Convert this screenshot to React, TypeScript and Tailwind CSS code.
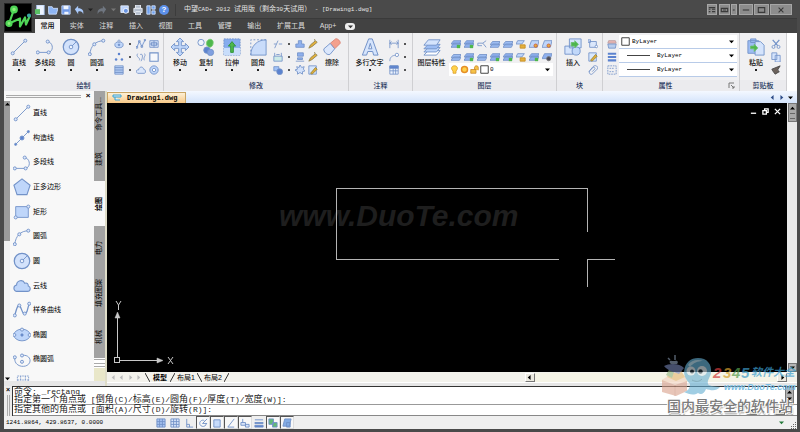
import { useState, type ReactNode } from 'react';
import clsx from 'clsx';

const LINE = '#7292c8';
const FILL = '#bfd6fa';
const DEEP = '#5b82cf';
const GREEN = '#4eb74c';
const GOLD = '#e3b03a';

function Node({ x, y }: { x: number; y: number }) {
  return <circle cx={x} cy={y} r={1.7} fill="#dfe9fb" stroke={LINE} strokeWidth={1} />;
}

// 20 x 20 drawings used by the ribbon and the palette
const BIG: Record<string, ReactNode> = {
  line: (
    <>
      <path d="M3 17 17 3" />
      <Node x={3} y={17} />
      <Node x={17} y={3} />
    </>
  ),
  xline: (
    <>
      <path d="M2 18 18 2" />
      <circle cx={10} cy={10} r={2.2} fill={DEEP} />
      <circle cx={3} cy={17} r={1.2} fill={DEEP} />
      <circle cx={17} cy={3} r={1.2} fill={DEEP} />
    </>
  ),
  pline: (
    <>
      <path d="M2 16h12c5-1 6-9 0-12" />
      <Node x={2} y={16} />
      <Node x={14} y={16} />
      <Node x={13} y={4} />
    </>
  ),
  circle: (
    <>
      <circle cx={10} cy={10} r={8.6} fill="#d3e2fb" strokeWidth={1.4} />
      <circle cx={10} cy={10} r={2} fill="#eef4fe" />
      <path d="m11 9 5-5" />
    </>
  ),
  arc: (
    <>
      <path d="M2 18C3 9 8 3 18 3" />
      <Node x={2} y={18} />
      <Node x={7} y={7} />
      <Node x={17} y={3} />
    </>
  ),
  polygon: <path d="m10 1 9 7-3.500 10.500h-11L1 8z" fill={FILL} strokeWidth={1.200} />,
  rect: (
    <>
      <path d="M3 4h14v12H3z" fill={FILL} />
      <Node x={17} y={4} />
      <Node x={3} y={16} />
    </>
  ),
  cloud: (
    <path d="M4 16c-4-1-4-6 0-7 0-5 7-7 9-2 3-1 4 1 4 3 3 1 3 6-1 6z" fill={FILL} strokeWidth={1.200} />
  ),
  spline: (
    <>
      <path d="M2 16C4 8 6 2 8 6s3 10 6 8 2-8 4-10" strokeWidth={1.400} />
      <Node x={2} y={16} />
      <Node x={7} y={5} />
      <Node x={13} y={14} />
      <Node x={18} y={3} />
    </>
  ),
  ellipse: (
    <>
      <ellipse cx={10} cy={10} rx={9} ry={6.500} fill={FILL} />
      <Node x={10} y={4} />
      <Node x={1.500} y={10} />
      <Node x={18.500} y={10} />
      <circle cx={10} cy={10} r={1.300} fill={DEEP} />
    </>
  ),
  ellipseArc: (
    <>
      <path d="M2 8c-1 11 16 12 17 3 0-5-5-7-9-6" />
      <Node x={2} y={7} />
      <Node x={10} y={5} />
      <Node x={10} y={12} />
    </>
  ),
  block: <path d="M3 20V5h14v15M7 5v15M13 5v15M3 10h14" strokeDasharray="2 1" />,
  move: (
    <path
      d="m10 0 4 4h-2.500v4.500H16V6l4 4-4 4v-2.500h-4.500V16H14l-4 4-4-4h2.500v-4.500H4V14l-4-4 4-4v2.500h4.500V4H6z"
      fill={FILL}
    />
  ),
  copy: (
    <>
      <circle cx={4.500} cy={5} r={3.500} fill="#eff4fc" />
      <path d="M11 4c2-4 7-3 7 1s-3 6-5 5-3-3-2-6z" fill={GREEN} stroke="#75c96f" />
      <circle cx={11} cy={13.500} r={3.500} fill={DEEP} />
      <circle cx={15} cy={16} r={3.500} fill="#7f9fe0" />
    </>
  ),
  stretch: (
    <>
      <path d="M1 1h18v18H1z" fill="#86acee" strokeDasharray="2 1" />
      <path d="M1 11h18v8H1z" fill="#c8ddfb" stroke="none" />
      <path d="m10 4 4 5h-2.500v7h-3V9H6z" fill={GREEN} stroke="#2d9339" />
    </>
  ),
  fillet: (
    <>
      <path d="M2 19C2 9 9 2 19 2v17z" fill="#c9dcfa" />
      <path d="M2 19V2h17" strokeDasharray="2 2" />
    </>
  ),
  erase: (
    <>
      <path d="m8 6 6-5c2-1 6 3 5 5l-6 6z" fill="#f3a08d" stroke="#da8273" />
      <path d="m8 6 5 6-5 6c-3 2-8-3-7-6z" fill="#dbe7fc" />
    </>
  ),
  text: <path d="M8.500 1h4L19 19h-5l-1-4H7.500l-1.300 4H1.500zM10.300 6 8.500 12h3.600z" fill="#d5e4fc" strokeWidth={1.100} />,
  layers: (
    <>
      <path d="M6 14h13l-4 5H1z" fill="#fff" />
      <path d="M6 10.500h13L15 15.500H1z" fill={FILL} />
      <path d="M6 7h13l-4 5H1z" fill="#9dbdf3" />
      <path d="M6 2h13l-4 6H1z" fill="#d5e4fc" />
    </>
  ),
  insert: (
    <>
      <path d="M6 1h13v10H6zM1 9h9v9H1z" fill="#d5e4fc" />
      <circle cx={13.500} cy={14.500} r={4.500} fill="#c1d8fa" />
      <path d="M8 5h4V3l4 4-4 4V9H8z" fill={GREEN} stroke="#6cc070" />
    </>
  ),
  paste: (
    <>
      <path d="M1 3h12v14H1zM4 1h6v4H4z" fill="#9dbdf3" />
      <path d="M9 4h6l4 4v11H9z" fill="#d5e4fc" />
      <path d="M4 9h4V7l4 4-4 4v-3H4z" fill={GREEN} stroke="#6cc070" />
    </>
  ),
};

// 12 x 12 drawings
const SMALL: Record<string, ReactNode> = {
  dot: <circle cx={6} cy={6} r={1.500} fill="#222" stroke="none" />,
  ellipse: (
    <>
      <ellipse cx={6} cy={7} rx={5} ry={3.500} fill={FILL} />
      <circle cx={6} cy={2.500} r={1.300} fill="#fff" />
      <circle cx={6} cy={7} r={1} fill={DEEP} />
    </>
  ),
  spline: <path d="M1 10 4 3l3 6 4-8M0 9h2v2H0zM3 2h2v2H3zM6 8h2v2H6zM10 0h2v2h-2z" fill="#dfe9fb" />,
  table: <path d="M1 2h10v8H1zM1 6h10M6 2v8M3 4h6v4H3z" fill="#dbe7fb" />,
  points: (
    <>
      <circle cx={6} cy={2.500} r={1.500} fill={DEEP} stroke="none" />
      <circle cx={2.500} cy={9} r={1.500} fill={DEEP} stroke="none" />
      <circle cx={9.500} cy={9} r={1.500} fill={DEEP} stroke="none" />
    </>
  ),
  helix: <path d="M2 2c-3 4 4 5 2 8M5 3c4-2 3 5 1 8M10 2c3 2-2 4 0 8" />,
  square: <path d="M1 1h10v10H1z" fill="#f6f8fc" strokeWidth={1.300} />,
  hatch: <path d="M1 1h10v10H1zM1 3h10M1 5h10M1 7h10M1 9h10" fill={FILL} />,
  cloud: <path d="M2 10c-3-2-1-5 1-4 1-5 6-4 6-1 3 0 3 5 1 5z" fill="#dbe7fb" />,
  donut: (
    <>
      <circle cx={6} cy={6} r={5} fill={FILL} />
      <circle cx={6} cy={6} r={2} fill="#fff" />
    </>
  ),
  trim: <path d="m2 11 4-9M1 6h3M7 6h4" />,
  mirror: <path d="M1 10V6h3V2h4v4h3v4z" fill="#8fb0ee" />,
  brush: <path d="m1 11 2-4 6-5 2 2-6 5zM8 2V0" fill={GOLD} stroke="#8c8052" />,
  array: <path d="M1 5h10v6H1zM2 5V1M10 5V1M4 3h4" fill="#cdeae7" />,
  align: <path d="M3 1h7v4H3zM1 11h10M3 7h6v2H3z" fill="#8fb0ee" />,
  offset: (
    <>
      <path d="M1 2h6v5H1z" fill="#a0c1f7" />
      <circle cx={8} cy={8} r={3.500} fill={DEEP} />
    </>
  ),
  gear: <path d="m6 0 2 3 3-1-1 3 2 2-3 1v3L6 9l-3 2V8L0 6l3-1-1-3 3 1z" fill="#d3e2fb" />,
  edit: (
    <>
      <path d="M1 1h9v10H1z" fill="#d8e7fb" />
      <path d="m3 10 6-7 2 2-6 6z" fill={GOLD} stroke="#958239" />
    </>
  ),
  dim: <path d="M1 1v10M11 1v10M1 5h10M3 3 1 5l2 2M9 3l2 2-2 2" />,
  leader: (
    <>
      <path d="M1 11c0-5 3-7 7-7" />
      <circle cx={9.500} cy={3.500} r={2} fill="#fff" />
    </>
  ),
  grid: (
    <>
      <path d="M1 1h10v10H1zM1 7h10M5 4v7M8 4v7" fill="#eef4fe" />
      <path d="M1 1h10v3H1z" fill={DEEP} />
    </>
  ),
  layer: <path d="M3 6h9l-2 4H0zM3 3h9l-2 4H0z" fill="#9dbdf3" />,
  layerCheck: (
    <>
      <path d="M3 5h9l-2 5H0zM3 2h9l-2 4H0z" fill="#8fb0ee" />
      <path d="M7 7h4v4H7z" fill={GREEN} stroke="none" />
    </>
  ),
  layerArrow: <path d="M1 5h6l4-3M7 5l4 5M1 5v3h5" />,
  layerGold: (
    <>
      <path d="M2 2h8L7 6H0z" fill={FILL} />
      <path d="M5 7h6v4H5z" fill={GOLD} stroke="#c58b22" />
    </>
  ),
  layerRed: (
    <>
      <path d="M3 2h9l-2 8H0z" fill={FILL} />
      <circle cx={8} cy={8} r={2} fill={GOLD} stroke="#cb593d" />
    </>
  ),
  layerDark: (
    <>
      <path d="M3 2h9l-2 6H0z" fill="#8fb0ee" />
      <circle cx={8} cy={8} r={2.500} fill="#4c4c5c" stroke="#777" />
    </>
  ),
  bulb: <path d="M4 8C0 4 3 1 6 1s6 3 2 7v3H4z" fill="#ffd24a" stroke="#d89a28" />,
  sun: <circle cx={6} cy={6} r={4} fill="#ffd24a" stroke="#e58e27" strokeWidth={2} />,
  lock: <path d="M1 6h7v5H1zM6 6V3c1-3 5-2 5 0v4" fill="#f6c248" stroke="#c58325" />,
  swatch: <path d="M1 1h10v10H1z" fill="#fff" stroke="#333" strokeWidth={1.200} />,
  create: (
    <>
      <path d="M2 3h8v7H2zM0 1h3v3H0z" fill="#dbe7fb" />
      <circle cx={10} cy={9} r={1.500} fill="#fff" />
    </>
  ),
  clip: <path d="m1 8 5-6c3-3 7 0 5 3l-5 5c-2 3-6 0-4-3l4-4c2-1 3 1 2 2L5 8" />,
  palette: (
    <>
      <path d="M2 2h8l1 3H1z" fill="#e9b6b2" stroke="#bb9b9d" />
      <path d="M1 6h10l-1 5H2z" fill="#b9cdec" />
    </>
  ),
  weights: <path d="M1 2h10M1 6h10M1 10h10" stroke={DEEP} strokeWidth={2.500} />,
  linetype: <path d="M1 1h10v10H1zM3 4h6M3 8h6" strokeDasharray="2 1" />,
  cut: (
    <>
      <path d="m2 1 6 7M10 1 4 8" strokeWidth={1.500} />
      <circle cx={3} cy={9.500} r={1.800} />
      <circle cx={9} cy={9.500} r={1.800} />
    </>
  ),
  pages: <path d="M1 1h6v8H1zM5 4h6v8H5z" fill="#d5e4fc" />,
  match: <path d="m1 5 5-2 5-2-3 5 2 2-5 3-3-4z" fill="#6c625c" stroke="#444" />,
  save: (
    <>
      <path d="M1 1h10v10H1z" fill="#6f98e6" stroke="#c3d7fb" />
      <path d="M3 1h6v4H3zM4 8h5v3H4z" fill="#eef4ff" stroke="none" />
    </>
  ),
  newDoc: (
    <>
      <path d="M2 0h9v12H2z" fill="#eef4ff" stroke="#a6c4f0" />
      <path d="M0 5h6v6H0z" fill="#5bc065" stroke="none" />
    </>
  ),
  open: <path d="M0 2h5l1 2h6L10 11H1z" fill="#8eb5f4" stroke="#cddffb" />,
  undo: <path d="m1 5 4-4v3c5 0 7 3 6 7-1-3-3-4-6-3v3z" fill="#a9c9fa" stroke="none" />,
  redo: <path d="m11 5-4-4v3C2 4 0 7 1 11c1-3 3-4 6-3v3z" fill="#6f7680" stroke="none" />,
  preview: (
    <>
      <path d="M1 1h9v8H1z" fill="#bcd3fb" stroke="#e5eefe" />
      <circle cx={7} cy={7} r={3} fill="#6b96e3" stroke="#fff" />
    </>
  ),
  print: <path d="M3 0h6v4h2v5H9v3H3V9H1V4h2zM3 4h6M3 8h6" fill="#b5bfce" stroke="#f2f5fa" />,
  publish: <path d="M1 1h4v10H1zM7 1h4v4H7zM7 7h4v4H7z" fill="#6fa0ef" stroke="#dce8fd" />,
};

function BigIcon({ name, className }: { name: string; className?: string }) {
  return (
    <svg viewBox="0 0 20 20" className={clsx('shrink-0', className)} fill="none" stroke={LINE} aria-hidden="true">
      {BIG[name]}
    </svg>
  );
}

function SmallIcon({ name, className = 'size-[10px]' }: { name: string; className?: string }) {
  return (
    <svg viewBox="0 0 12 12" className={clsx('shrink-0', className)} fill="none" stroke={LINE} aria-hidden="true">
      {SMALL[name]}
    </svg>
  );
}

function Arrow({ dir = 'down', className = 'text-black' }: { dir?: 'down' | 'left' | 'right' | 'up'; className?: string }) {
  const d = {
    down: 'M0 2h7L3.500 6z',
    up: 'M0 5h7L3.500 1z',
    left: 'M5 0v7L1 3.500z',
    right: 'M2 0v7l4-3.500z',
  }[dir];
  return (
    <svg viewBox="0 0 7 7" className={clsx('size-[5px] shrink-0', className)} fill="currentColor" aria-hidden="true">
      <path d={d} />
    </svg>
  );
}

function ToolButton({ icon, label, menu = true, wide = false }: { icon: string; label: string; menu?: boolean; wide?: boolean }) {
  return (
    <button type="button" className={clsx('flex shrink-0 flex-col items-center pt-[5px]', wide ? 'w-[35px]' : 'w-[26px]')}>
      <BigIcon name={icon} className="size-[18px]" />
      <span className="mt-[2px] text-[7px] leading-[9px] font-medium whitespace-nowrap text-[#151515]">{label}</span>
      {menu && <span className="mt-[2px] size-[2px] bg-[#222]" />}
    </button>
  );
}

// A name of "dot" is the drop-down mark of the icon before it
function IconColumns({ icons, className }: { icons: string[]; className: string }) {
  return (
    <div className={clsx('grid auto-rows-[13px] content-start justify-items-center pt-[4px]', className)}>
      {icons.map((name, i) => (
        <button key={i} type="button" aria-label={name} className="flex items-center">
          <SmallIcon name={name} className={name === 'dot' ? 'size-[8px]' : 'size-[10px]'} />
        </button>
      ))}
    </div>
  );
}

function Panel({ title, className, launcher, children }: { title: string; className: string; launcher?: boolean; children: ReactNode }) {
  return (
    <section className={clsx('flex shrink-0 flex-col border-r border-[#cfcfd2]', className)}>
      <div className="flex h-[47px]">{children}</div>
      <div className="flex h-[11px] items-center bg-[#ebebee] text-[7px] text-[#26365c]">
        <h2 className="flex-1 text-center leading-[11px] font-medium">{title}</h2>
        {launcher && (
          <button type="button" aria-label="属性设置" className="mr-1">
            <svg viewBox="0 0 7 7" className="size-[7px]" fill="none" stroke="#777" aria-hidden="true">
              <path d="M1 6V1h5M3 3l3 3M6 4v2H4" />
            </svg>
          </button>
        )}
      </div>
    </section>
  );
}

const MENU_TABS = ['实体', '注释', '插入', '视图', '工具', '管理', '输出'];

const PALETTE = [
  { icon: 'line', label: '直线' },
  { icon: 'xline', label: '构造线' },
  { icon: 'pline', label: '多段线' },
  { icon: 'polygon', label: '正多边形' },
  { icon: 'rect', label: '矩形' },
  { icon: 'arc', label: '圆弧' },
  { icon: 'circle', label: '圆' },
  { icon: 'cloud', label: '云线' },
  { icon: 'spline', label: '样条曲线' },
  { icon: 'ellipse', label: '椭圆' },
  { icon: 'ellipseArc', label: '椭圆弧' },
];

const SIDE_TABS = [
  { label: '命令工具...', size: 'h-[45px]' },
  { label: '建筑', size: 'h-[45px]' },
  { label: '绘图', size: 'h-[45px]' },
  { label: '电力', size: 'h-[44px]' },
  { label: '填充图案', size: 'h-[45px]' },
  { label: '机械', size: 'h-[43px]' },
];

function TitleBar() {
  return (
    <div className="flex h-[19px] items-center border-b border-[#3a3a3a] pt-px pl-[3px]">
      <div className="flex items-center gap-[3px]">
        <QuickButton name="newDoc" label="新建" />
        <QuickButton name="open" label="打开" />
        <QuickButton name="save" label="保存" />
        <QuickButton name="undo" label="放弃" />
        <Arrow className="mx-px text-[#222]" />
        <QuickButton name="redo" label="重做" />
        <Arrow className="mx-px text-[#777]" />
        <QuickButton name="preview" label="预览" />
        <QuickButton name="print" label="打印" />
        <QuickButton name="publish" label="发布" />
        <button type="button" aria-label="帮助" className="size-[10px] rounded-full bg-[#5d91ea] text-[8px] leading-[10px] font-bold text-white">
          ?
        </button>
      </div>
      <span className="ml-[6px] h-[12px] w-px bg-[#3c3c3c]" />
      <h1 className="ml-[8px] text-[7px] whitespace-pre text-[#e4e4e4]">
        中望<Mono>CAD+ 2012 </Mono>试用版（剩余<Mono>30</Mono>天试用）<Mono> - [Drawing1.dwg]</Mono>
      </h1>
      <div className="mr-[5px] ml-auto flex items-center gap-px text-[#3a3a3a]">
        <WinButton label="样式" className="mr-px w-[10px]" d="M1 2h8M1 4h2M5 4h4M1 7h2M5 7h4" />
        <WinButton label="界面" className="w-[11px]" d="M1 3h8v4H1zM3 5h4" />
        <WinButton label="更多" className="mr-px w-[6px]" d="M3 4h3v2H3z" />
        <WinButton label="最小化" className="w-[14px]" d="M1 5h8" />
        <WinButton label="最大化" className="w-[15px]" d="M1 2h8v6H1z" />
        <WinButton label="关闭" className="w-[22px]" d="m2 2 6 6M8 2 2 8" />
      </div>
    </div>
  );
}

function Mono({ children }: { children: ReactNode }) {
  return <span className="font-['Liberation_Mono','Noto_Sans_CJK_SC',monospace] text-[6px]">{children}</span>;
}

function QuickButton({ name, label }: { name: string; label: string }) {
  return (
    <button type="button" aria-label={label}>
      <SmallIcon name={name} />
    </button>
  );
}

function WinButton({ label, className, d }: { label: string; className: string; d: string }) {
  return (
    <button type="button" aria-label={label} className={clsx('flex h-[11px] items-center justify-center border border-[#a6a6a6] bg-[#8c8c8c]', className)}>
      <svg viewBox="0 0 10 10" className="h-[8px] w-full" fill="none" stroke="currentColor" strokeWidth={1.400} aria-hidden="true">
        <path d={d} />
      </svg>
    </button>
  );
}

const SELECT =
  "h-[12px] min-w-0 flex-1 appearance-none bg-transparent font-['Liberation_Mono',monospace] text-[6px] leading-[12px] text-black outline-none";

function PropertySelect({ label, lead }: { label: string; lead: 'swatch' | 'line' }) {
  return (
    <div className="flex h-[14px] items-center border-b border-[#b8cbe8] bg-white pr-[3px]">
      {lead === 'swatch' ? (
        <SmallIcon name="swatch" className="mx-[2px] size-[9px]" />
      ) : (
        <span className="mr-[7px] ml-[8px] h-px w-[23px] shrink-0 bg-[#444]" />
      )}
      <select aria-label={label} className={SELECT}>
        <option>ByLayer</option>
      </select>
      <Arrow />
    </div>
  );
}

function Ribbon() {
  return (
    <div className="flex h-[58px] overflow-hidden bg-[#f0f0f2]">
      <Panel title="绘制" className="w-[160px]">
        <div className="flex pl-[2px]">
          <ToolButton icon="line" label="直线" />
          <ToolButton icon="pline" label="多线段" />
          <ToolButton icon="circle" label="圆" />
          <ToolButton icon="arc" label="圆弧" />
        </div>
        <IconColumns
          className="ml-[2px] grid-cols-[14px_8px_13px_13px]"
          icons={['ellipse', 'dot', 'spline', 'table', 'points', 'dot', 'helix', 'square', 'hatch', 'dot', 'cloud', 'donut']}
        />
      </Panel>
      <Panel title="修改" className="w-[185px]">
        <div className="flex pl-[3px]">
          <ToolButton icon="move" label="移动" />
          <ToolButton icon="copy" label="复制" />
          <ToolButton icon="stretch" label="拉伸" />
          <ToolButton icon="fillet" label="圆角" />
        </div>
        <IconColumns
          className="grid-cols-[14px_8px_13px_13px]"
          icons={['trim', 'dot', 'mirror', 'brush', 'array', 'dot', 'align', 'brush', 'offset', 'dot', 'gear', 'edit']}
        />
        <ToolButton icon="erase" label="擦除" menu={false} />
      </Panel>
      <Panel title="注释" className="w-[64px]">
        <div className="flex pl-[3px]">
          <ToolButton icon="text" label="多行文字" wide />
        </div>
        <IconColumns className="grid-cols-[14px_8px]" icons={['dim', 'dot', 'leader', 'dot', 'grid', 'dot']} />
      </Panel>
      <Panel title="图层" className="w-[144px]">
        <div className="flex pl-px">
          <ToolButton icon="layers" label="图层特性" wide menu={false} />
        </div>
        <div>
          <IconColumns
            className="grid-cols-[repeat(8,13px)]"
            icons={[
              'layerCheck', 'layerCheck', 'layerArrow', 'layer', 'layer', 'layerGold', 'layerRed', 'layerRed',
              'layer', 'layerCheck', 'layer', 'layerCheck', 'layerCheck', 'layerGold', 'layerCheck', 'layerDark',
            ]}
          />
          <div className="flex h-[13px] items-center gap-px bg-white pr-[3px] pl-px">
            <SmallIcon name="bulb" className="size-[9px]" />
            <SmallIcon name="sun" className="size-[9px]" />
            <SmallIcon name="lock" className="size-[9px]" />
            <SmallIcon name="swatch" className="size-[9px]" />
            <select aria-label="当前图层" className={SELECT}>
              <option>0</option>
            </select>
            <Arrow />
          </div>
        </div>
      </Panel>
      <Panel title="块" className="w-[46px]">
        <div className="flex pl-[3px]">
          <ToolButton icon="insert" label="插入" menu={false} />
        </div>
        <IconColumns className="grid-cols-[14px]" icons={['create', 'edit', 'clip']} />
      </Panel>
      <Panel title="属性" className="w-[137px]" launcher>
        <IconColumns className="ml-[2px] grid-cols-[14px]" icons={['palette', 'weights', 'linetype']} />
        <div className="flex-1 pt-[2px] pr-[2px]">
          <PropertySelect label="颜色" lead="swatch" />
          <PropertySelect label="线宽" lead="line" />
          <PropertySelect label="线型" lead="line" />
        </div>
      </Panel>
      <Panel title="剪贴板" className="w-[47px]">
        <div className="flex pl-[3px]">
          <ToolButton icon="paste" label="粘贴" />
        </div>
        <IconColumns className="grid-cols-[14px]" icons={['cut', 'pages', 'match']} />
      </Panel>
      <div className="flex-1 bg-white" />
    </div>
  );
}

function ToolPalette() {
  const [active, setActive] = useState('绘图');
  return (
    <aside className="flex w-[103px] shrink-0 overflow-hidden border-r-2 border-[#dedcc8]">
      <div className="flex min-w-0 flex-1 flex-col bg-[#f8f8f8]">
        <div className="flex h-[10px] shrink-0 items-center gap-[4px] pl-[2px]">
          <span className="h-[3px] flex-1 border-y border-[#a9a9a9]" />
          <button type="button" aria-label="关闭面板" className="mr-[3px] w-[6px] text-[8px] leading-[8px] font-bold">×</button>
        </div>
        <div className="flex min-h-0 flex-1">
          <div className="flex w-[6px] flex-col items-center justify-between bg-[#f1f1f1]">
            <div className="flex h-[50%] w-full flex-col items-center bg-[#9b9b9b] pt-px">
              <Arrow dir="up" />
            </div>
            <Arrow />
          </div>
          <ul className="flex flex-1 flex-col">
            {PALETTE.map((item) => (
              <li key={item.label} className="flex min-h-0 flex-1">
                <button type="button" className="flex items-center gap-[2px] pl-[3px]">
                  <BigIcon name={item.icon} className="size-[18px]" />
                  <span className="text-[7px] whitespace-nowrap text-black">{item.label}</span>
                </button>
              </li>
            ))}
            <li className="flex h-[9px] shrink-0 items-start overflow-hidden pl-[5px]">
              <BigIcon name="block" className="size-[16px]" />
            </li>
          </ul>
        </div>
        <div className="h-[5px] shrink-0 bg-[#e6e6e6]" />
      </div>
      <div role="tablist" className="flex w-[11px] flex-col bg-[#a2a2a2]">
        {SIDE_TABS.map((tab) => (
          <button
            key={tab.label}
            type="button"
            role="tab"
            aria-selected={active === tab.label}
            onClick={() => setActive(tab.label)}
            className={clsx(
              'flex items-center justify-center text-[7px] text-black',
              tab.size,
              active === tab.label ? 'bg-[#f8f8f8] font-bold' : 'bg-[#a2a2a2]',
            )}
          >
            <span className="rotate-180 whitespace-nowrap [text-orientation:sideways] [writing-mode:vertical-rl]">{tab.label}</span>
          </button>
        ))}
        <div className="flex h-[10px] flex-col justify-between bg-white py-px">
          <span className="h-px bg-[#aaa]" />
          <span className="h-px bg-[#aaa]" />
          <span className="h-px bg-[#aaa]" />
        </div>
        <div className="flex-1 bg-[#e9e7c9]" />
        <div className="h-[5px] bg-[#e6e6e6]" />
      </div>
    </aside>
  );
}

function Canvas() {
  return (
    <div className="relative min-w-0 flex-1 overflow-hidden bg-black">
      <span className="absolute top-[95px] left-[172px] font-['Liberation_Sans',sans-serif] text-[30px] leading-[36px] font-bold text-[#1e1e1e] italic">
        www.DuoTe.com
      </span>
      <svg className="absolute inset-0 size-full" fill="none" stroke="#b4b4b4" shapeRendering="crispEdges" aria-label="图形">
        <path d="M452 156H229V85h251v44M480 184v-28h28" />
      </svg>
      <svg viewBox="0 0 66 66" className="absolute bottom-[6px] left-[6px] size-[66px]" fill="none" stroke="#c8c8c8" aria-label="坐标系">
        <path d="M1.500 57.500h5v5h-5zM4.500 57V15M7 60.500h41" shapeRendering="crispEdges" />
        <path d="m2 18 2.500-6L7 18zM44 58l6 2.500-6 2.500z" fill="#c8c8c8" strokeWidth={0.500} />
        <path d="m3 1 2.500 4L8 1M5.500 5v5M55 57l5 7M60 57l-5 7" />
      </svg>
      <div className="absolute top-[5px] right-[6px] flex items-center gap-[5px] text-white">
        <CanvasButton label="最小化" d="M1 6h6" />
        <CanvasButton label="还原" d="M1 3h4v4H1zM3 3V1h4v4H5" />
        <CanvasButton label="关闭" d="m1 1 6 6M7 1 1 7" />
      </div>
    </div>
  );
}

function CanvasButton({ label, d }: { label: string; d: string }) {
  return (
    <button type="button" aria-label={label}>
      <svg viewBox="0 0 8 8" className="size-[7px]" fill="none" stroke="currentColor" strokeWidth={1.500} aria-hidden="true">
        <path d={d} />
      </svg>
    </button>
  );
}

function Slash({ back }: { back?: boolean }) {
  return (
    <svg viewBox="0 0 5 9" className="h-[9px] w-[5px]" stroke="#333" aria-hidden="true">
      <path d={back ? 'M0 0 5 9' : 'M5 0 0 9'} />
    </svg>
  );
}

function ScrollButton({ dir }: { dir: 'left' | 'right' | 'up' | 'down' }) {
  return (
    <button type="button" aria-label={dir} className="flex h-[9px] w-[10px] items-center justify-center border border-white border-r-[#777] border-b-[#777] bg-[#eceae0]">
      <Arrow dir={dir} />
    </button>
  );
}

function Workspace() {
  return (
    <main className="flex min-w-0 flex-1 flex-col bg-[#ececec]">
      <div className="flex h-[12px] items-end bg-linear-to-b from-[#f4f8ff] to-[#d3e3fb]">
        <button type="button" className="flex h-[11px] w-[79px] items-center gap-[5px] border border-b-0 border-[#c9a565] bg-linear-to-b from-[#fdf0d6] to-[#f8c987] pl-[4px]">
          <svg viewBox="0 0 10 8" className="h-[8px] w-[10px]" fill="#d9f1fa" stroke="#3aa0cf" aria-hidden="true">
            <path d="M1 1h8v2H1zM3 3v3h5" />
          </svg>
          <span className="font-['Liberation_Mono',monospace] text-[7px] font-bold text-black">Drawing1.dwg</span>
        </button>
        <div className="mr-[4px] mb-[3px] ml-auto flex gap-[4px]">
          <Arrow dir="left" className="text-[#2c4a86]" />
          <Arrow dir="right" className="text-[#2c4a86]" />
          <Arrow />
        </div>
      </div>
      <div className="flex min-h-0 flex-1">
        <Canvas />
        <div className="flex w-[10px] flex-col items-center bg-[#e9e9e9] pl-px">
          <div className="flex h-[19px] w-full flex-col items-center gap-[2px] border border-[#777] bg-[#a9a9a9] pt-[2px]">
            <Arrow dir="up" />
            <span className="h-[6px] w-[5px] border-y border-[#666]" />
          </div>
          <div className="mt-auto flex h-[9px] w-full items-center justify-center border border-[#777] bg-[#b4b4b4]">
            <Arrow />
          </div>
        </div>
      </div>
      <div className="flex h-[10px] items-center bg-[#f3f2ec] text-[7px] leading-[9px] text-black">
        <div className="flex w-[38px] justify-between px-[4px]">
          <Arrow dir="left" className="text-[#bbb]" />
          <Arrow dir="left" className="text-[#bbb]" />
          <Arrow dir="right" className="text-[#bbb]" />
          <Arrow dir="right" className="text-[#bbb]" />
        </div>
        <Slash back />
        <button type="button" className="w-[20px] font-bold">模型</button>
        <Slash />
        <button type="button" className="w-[22px]">布局1</button>
        <Slash back />
        <button type="button" className="w-[22px]">布局2</button>
        <Slash />
        <div className="mr-[10px] ml-auto flex w-[38%] justify-between bg-[#f5f4e6]">
          <ScrollButton dir="left" />
          <ScrollButton dir="right" />
        </div>
      </div>
      <div className="h-[4px] border-t border-white bg-[#e6e6e6]" />
    </main>
  );
}

const CMD = "font-['Liberation_Mono','Noto_Sans_CJK_SC',monospace] text-[9px] text-[#222]";

// CJK runs keep the 9px size, everything else is one step smaller
function CommandText({ text }: { text: string }) {
  return (
    <>
      {text.split(/([\u4e00-\u9fff]+)/).map((part, i) => (
        <span key={i} className={i % 2 ? 'text-[9px]' : 'text-[8px]'}>
          {part}
        </span>
      ))}
    </>
  );
}

function CommandLine() {
  return (
    <div className="flex h-[30px] shrink-0 bg-[#ececec]">
      <div className="flex w-[8px] shrink-0 flex-col items-center gap-px">
        <button type="button" aria-label="关闭命令行" className="text-[7px] leading-[8px] font-bold">×</button>
        <span className="w-[3px] flex-1 border-x border-[#aaa]" />
      </div>
      <div className="min-w-0 flex-1 border-t border-l border-[#333] bg-white">
        <div className="flex h-[18px] border-b border-[#999]">
          <div className={clsx('flex h-[17px] min-w-0 flex-1 flex-col justify-end pl-px leading-[9px] whitespace-pre', CMD)}>
            <p className="h-[8px]"><CommandText text="命令: _rectang" /></p>
            <p className="h-[9px]"><CommandText text="指定第一个角点或 [倒角(C)/标高(E)/圆角(F)/厚度(T)/宽度(W)]:" /></p>
          </div>
          <div className="mr-[3px] flex w-[9px] flex-col justify-between border border-[#777] bg-[#b0b0b0] px-px py-[2px]">
            <Arrow dir="up" />
            <Arrow />
          </div>
        </div>
        <div className="flex h-[11px] items-center border-b border-[#888]">
          <label htmlFor="command" className={clsx('pl-px leading-[10px] whitespace-pre', CMD)}>
            <CommandText text="指定其他的角点或 [面积(A)/尺寸(D)/旋转(R)]:" />
          </label>
          <input id="command" type="text" className={clsx('h-[9px] min-w-0 flex-1 bg-transparent outline-none', CMD)} />
          <div className="mr-[12px] flex gap-[18px]">
            <ScrollButton dir="left" />
            <ScrollButton dir="right" />
          </div>
        </div>
      </div>
    </div>
  );
}

const STATUS = [
  { label: '捕捉', d: 'M1 1h9v9H1zM4 1v9M7 1v9M1 4h9M1 7h9', on: false, fill: '#a9c4f2' },
  { label: '栅格', d: 'M1 1h9v9H1zM4 1v9M7 1v9M1 4h9M1 7h9', on: false, fill: '#dbe7fb' },
  { label: '正交', d: 'M3 1v9h7M3 7h3v3', on: false, fill: 'none' },
  { label: '极轴', d: 'M9 6c0 5-8 4-7-1 1-3 4-3 5-2M5 6l5-5M5 6h5', on: true, fill: 'none' },
  { label: '对象捕捉', d: 'M2 2h7v8H2z', on: true, fill: '#c7dbfb' },
  { label: '追踪', d: 'M2 10 9 1M2 10h7', on: true, fill: 'none' },
  { label: '动态输入', d: 'M1 5h5v3H1zM3 1v4M6 7h4v3H6z', on: true, fill: '#dbe7fb' },
  { label: '线宽', d: 'M1 2h9M1 5h9v1H1zM1 8h9v2H1z', on: false, fill: '#5b82cf' },
  { label: '模型', d: 'M1 1h5v6H1zM5 5h5v5H5z', on: true, fill: '#62ba75' },
  { label: '数字化仪', d: 'M3 1h7L8 9H1zM5 5h4v5H5z', on: true, fill: '#83ace5' },
];

function StatusBar() {
  return (
    <footer className="flex h-[13px] shrink-0 items-center bg-[#efefef]">
      <output className="w-[150px] pl-[2px] font-['Liberation_Mono',monospace] text-[6px] whitespace-nowrap text-black">
        1241.8864, 429.8637, 0.0000
      </output>
      {STATUS.map((item) => (
        <button
          key={item.label}
          type="button"
          aria-label={item.label}
          aria-pressed={item.on}
          className={clsx(
            'flex h-[13px] w-[14px] items-center justify-center border',
            item.on ? 'border-[#ddd] border-t-[#555] border-l-[#555] bg-[#f8f8f8]' : 'border-transparent',
          )}
        >
          <svg viewBox="0 0 11 11" className="size-[10px]" fill={item.fill} stroke={LINE} aria-hidden="true">
            <path d={item.d} />
          </svg>
        </button>
      ))}
      <Arrow className="mr-[6px] ml-auto text-[#237a3a]" />
      <svg viewBox="0 0 7 7" className="mt-auto size-[7px]" fill="#666" aria-hidden="true">
        <path d="M5 0h1v1H5zM3 2h1v1H3zM5 2h1v1H5zM1 4h1v1H1zM3 4h1v1H3zM5 4h1v1H5zM1 6h1v1H1zM3 6h1v1H3zM5 6h1v1H5z" />
      </svg>
    </footer>
  );
}

function SiteBadge() {
  return (
    <div className="pointer-events-none absolute right-[3px] bottom-[16px] h-[61px] w-[137px]">
      <svg viewBox="0 0 62 42" className="absolute top-0 left-0 h-[42px] w-[62px] opacity-60" fill="none" aria-hidden="true">
        <path d="M2 25 14 20l13 6v10l-11 5L2 37z" fill="#d9a08a" />
        <path d="m2 25 13 5 12-4-1-4-12-5z" fill="#f3d1bd" />
        <path d="M15 30v11" stroke="#c88a74" />
        <path d="m7 22 3-6 5 2 5-4 5 8-9 4z" fill="#e5b56f" />
        <path d="m6 20 4-7 4 4-2 6z" fill="#8fb47d" />
        <path d="M12 6c-3-1-3 2-1 3h6c2-2 0-4-2-3" fill="#8a9cb2" />
        <path d="M15 5V0M10 5 8 3" stroke="#8a9cb2" strokeWidth={1.500} />
        <path d="M4 11c5-3 16-3 20 2l-5 6c-5-2-11-3-15-8z" fill="#7382b3" />
        <path d="M38 3c9 0 14 6 13 15-1 5-4 7-3 11 1 2 5 2 12 3-4 5-10 3-14 2-2 5-5 6-8 4-5 3-9 1-14-1 4-1 6-4 6-8-4-4-6-8-6-12C25 7 31 3 38 3z" fill="#64aed1" />
        <path d="M28 10c3-5 10-6 15-4-5 0-10 2-13 6z" fill="#b8dff0" />
        <circle cx={31} cy={16} r={4.500} fill="#dceaf1" />
        <circle cx={42} cy={16} r={5} fill="#dceaf1" />
        <circle cx={32} cy={16.500} r={2} fill="#233642" />
        <circle cx={40.500} cy={16.500} r={2.200} fill="#233642" />
        <path d="M32 25c4 2 7 2 10-1" stroke="#397b9d" />
      </svg>
      <div className="absolute top-[9px] left-[53px] flex items-center text-[15px] leading-[17px] font-bold whitespace-nowrap italic opacity-70">
        <span className="w-[10px] text-[#d23c3c]">2</span>
        <span className="w-[9px] text-[#d6a12e]">3</span>
        <span className="w-[9px] text-[#58a04f]">4</span>
        <span className="w-[10px] text-[#3e9bc8]">5</span>
        <span className="text-[11px] text-[#3b9ed0]">软件大全</span>
      </div>
      <span className="absolute top-[27px] left-[64px] text-[9px] leading-[10px] font-bold whitespace-nowrap text-[#7cbfe4] italic">
        www.DuoTe.com
      </span>
      <span className="absolute top-[42px] left-[7px] text-[14px] leading-[18px] font-medium whitespace-nowrap text-[#7c7c7c] [text-shadow:1px_1px_0_#fff,-1px_-1px_0_#fff,1px_2px_1px_#999]">
        国内最安全的软件站
      </span>
    </div>
  );
}

export default function App() {
  return (
    <div className="relative flex h-screen flex-col overflow-hidden bg-[#4a4a4a] pr-[3px] pb-[3px] pl-[4px] font-['Liberation_Sans','Noto_Sans_CJK_SC',sans-serif]">
      <header className="flex h-[33px] shrink-0">
        <button type="button" aria-label="应用程序菜单" className="mt-[3px] h-[29px] w-[28px] shrink-0 border border-[#222] bg-black">
          <svg viewBox="0 0 26 26" className="size-full" fill="none" stroke="#4fd557" strokeWidth={2.200} aria-hidden="true">
            <path d="M9 5 4 19l11-5v8l5-9 1 7 4-9" strokeLinejoin="round" />
            <circle cx={9} cy={5} r={2.800} fill="#8df078" />
            <circle cx={4} cy={19} r={2.500} fill="#8df078" />
            <circle cx={24} cy={11} r={1} fill="#3aa5a0" stroke="#3aa5a0" />
          </svg>
        </button>
        <div className="min-w-0 flex-1">
          <TitleBar />
          <nav className="flex h-[14px] bg-[#424242] pl-[3px] text-[7px] text-[#dedede]">
            <button type="button" className="w-[25px] bg-[#f0f0f2] font-medium text-black">常用</button>
            <div className="ml-[2px] grid w-[207px] grid-cols-7">
              {MENU_TABS.map((tab) => (
                <button key={tab} type="button">{tab}</button>
              ))}
            </div>
            <button type="button" className="w-[44px]">扩展工具</button>
            <button type="button" className="w-[30px]">App+</button>
            <button type="button" aria-label="折叠功能区" className="ml-[2px] flex h-[7px] w-[10px] items-center justify-center self-center rounded-[3px] bg-[#eee]">
              <Arrow className="text-[#333]" />
            </button>
          </nav>
        </div>
      </header>
      <Ribbon />
      <div className="flex min-h-0 flex-1">
        <ToolPalette />
        <Workspace />
      </div>
      <CommandLine />
      <StatusBar />
      <SiteBadge />
    </div>
  );
}
